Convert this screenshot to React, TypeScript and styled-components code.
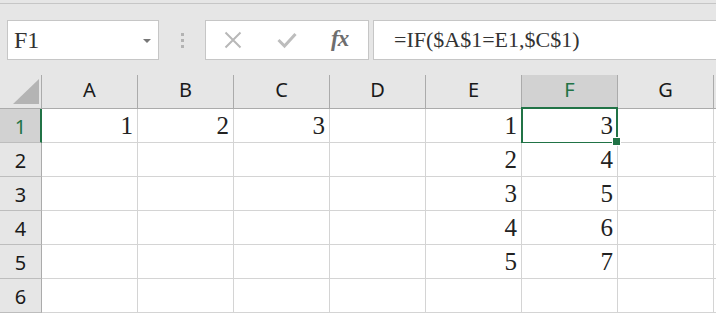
import React, { FC } from 'react';
import styled, { createGlobalStyle } from 'styled-components';

const GREEN = '#217346';
const cols = ['A', 'B', 'C', 'D', 'E', 'F', 'G', ''];
const rows = [1, 2, 3, 4, 5, 6];

const data: Record<string, string> = {
  A1: '1',
  B1: '2',
  C1: '3',
  E1: '1',
  F1: '3',
  E2: '2',
  F2: '4',
  E3: '3',
  F3: '5',
  E4: '4',
  F4: '6',
  E5: '5',
  F5: '7',
};

const active = { col: 'F', row: 1 };

const GlobalStyle = createGlobalStyle`
  html, body {
    margin: 0;
    padding: 0;
    background: #e6e6e6;
    overflow: hidden;
  }
  * {
    box-sizing: border-box;
  }
`;

const Window = styled.div`
  width: 716px;
  height: 313px;
  overflow: hidden;
  background: #e6e6e6;
`;

const RibbonEdge = styled.div`
  height: 4px;
  border-bottom: 1px solid #c6c6c6;
`;

const FormulaBar = styled.div`
  display: flex;
  align-items: stretch;
  height: 71px;
  padding: 16px 0 15px 7px;
`;

const Box = styled.div`
  background: #fff;
  border: 1px solid #c6c6c6;
  display: flex;
  align-items: center;
`;

const NameBox = styled(Box)`
  width: 152px;
  padding: 0 7px 0 6px;
  justify-content: space-between;
  font-family: 'Liberation Serif', serif;
  font-size: 24px;
  color: #333;
`;

const Caret = styled.span`
  width: 0;
  height: 0;
  border-left: 4px solid transparent;
  border-right: 4px solid transparent;
  border-top: 4px solid #777;
  margin-top: 2px;
`;

const Grip = styled.div`
  width: 46px;
  display: flex;
  flex-direction: column;
  align-items: center;
  justify-content: center;
  gap: 3px;
  & > span {
    width: 3px;
    height: 3px;
    background: #b3b3b3;
  }
`;

const Buttons = styled(Box)`
  width: 164px;
  padding-left: 18px;
  gap: 35px;
`;

const FxLabel = styled.span`
  font-family: 'Liberation Serif', serif;
  font-style: italic;
  font-weight: bold;
  font-size: 23px;
  color: #6e6e6e;
  letter-spacing: -1px;
  margin-left: -1px;
  margin-top: -3px;
`;

const FormulaInput = styled(Box)`
  flex: 1;
  margin-left: 4px;
  border-right: none;
  padding-left: 20px;
  font-family: 'Liberation Serif', serif;
  font-size: 22px;
  color: #333;
`;

const Sheet = styled.div`
  display: grid;
  grid-template-columns: 42px repeat(${cols.length}, 96px);
  grid-template-rows: 34px repeat(${rows.length}, 34px);
`;

const Corner = styled.div`
  border-right: 1px solid #ababab;
  border-bottom: 1px solid #ababab;
  svg {
    display: block;
  }
`;

const ColHead = styled.div<{ $on?: boolean }>`
  display: flex;
  align-items: center;
  justify-content: center;
  border-right: 1px solid #ababab;
  border-bottom: ${({ $on }) => ($on ? `2px solid ${GREEN}` : '1px solid #ababab')};
  background: ${({ $on }) => ($on ? '#d2d2d2' : '#e6e6e6')};
  color: ${({ $on }) => ($on ? GREEN : '#1a1a1a')};
  font-family: 'Noto Sans', 'Open Sans', sans-serif;
  font-size: 20px;
  padding-bottom: ${({ $on }) => ($on ? '4px' : '5px')};
`;

const RowHead = styled.div<{ $on?: boolean }>`
  display: flex;
  align-items: center;
  justify-content: center;
  border-right: ${({ $on }) => ($on ? `2px solid ${GREEN}` : '1px solid #ababab')};
  border-bottom: 1px solid #bdbdbd;
  background: ${({ $on }) => ($on ? '#d2d2d2' : '#e6e6e6')};
  color: ${({ $on }) => ($on ? GREEN : '#1a1a1a')};
  font-family: 'Noto Sans', 'Open Sans', sans-serif;
  font-size: 20px;
  padding-top: 2px;
  padding-left: ${({ $on }) => ($on ? '1px' : '0')};
`;

const Cell = styled.div<{ $on?: boolean }>`
  position: relative;
  display: flex;
  align-items: flex-end;
  justify-content: flex-end;
  padding: 0 4px 1px 0;
  background: #fff;
  border-right: 1px solid #d4d4d4;
  border-bottom: 1px solid #d4d4d4;
  font-family: 'Liberation Serif', serif;
  font-size: 25px;
  line-height: 30px;
  color: #222;
  ${({ $on }) =>
    $on &&
    `
    &::before {
      content: '';
      position: absolute;
      left: -1px;
      top: -2px;
      right: -1px;
      bottom: -2px;
      border: 2px solid ${GREEN};
      pointer-events: none;
    }
    &::after {
      content: '';
      position: absolute;
      right: -4px;
      bottom: -4px;
      width: 7px;
      height: 7px;
      background: ${GREEN};
      border: 1px solid #fff;
      z-index: 2;
    }
  `}
`;

const CloseIcon: FC = () => (
  <svg width="18" height="18" viewBox="0 0 18 18">
    <path d="M1.5 1.5 L16.5 16.5 M16.5 1.5 L1.5 16.5" stroke="#b8b8b8" strokeWidth="2" fill="none" />
  </svg>
);

const CheckIcon: FC = () => (
  <svg width="20" height="18" viewBox="0 0 20 18">
    <path d="M1.5 9 L7.5 15 L18.5 3" stroke="#bdbdbd" strokeWidth="3" fill="none" />
  </svg>
);

const App: FC = () => (
  <Window>
    <GlobalStyle />
    <RibbonEdge />
    <FormulaBar>
      <NameBox>
        <span>F1</span>
        <Caret />
      </NameBox>
      <Grip>
        <span />
        <span />
        <span />
      </Grip>
      <Buttons>
        <CloseIcon />
        <CheckIcon />
        <FxLabel>fx</FxLabel>
      </Buttons>
      <FormulaInput>=IF($A$1=E1,$C$1)</FormulaInput>
    </FormulaBar>
    <Sheet>
      <Corner>
        <svg width="41" height="33" viewBox="0 0 41 33">
          <polygon points="13,29 39,29 39,4" fill="#b4b4b4" />
        </svg>
      </Corner>
      {cols.map((c, i) => (
        <ColHead key={i} $on={c === active.col}>
          {c}
        </ColHead>
      ))}
      {rows.map((r) => (
        <React.Fragment key={r}>
          <RowHead $on={r === active.row}>{r}</RowHead>
          {cols.map((c, i) => (
            <Cell key={i} $on={c === active.col && r === active.row}>
              {data[`${c}${r}`] ?? ''}
            </Cell>
          ))}
        </React.Fragment>
      ))}
    </Sheet>
  </Window>
);

export default App;
